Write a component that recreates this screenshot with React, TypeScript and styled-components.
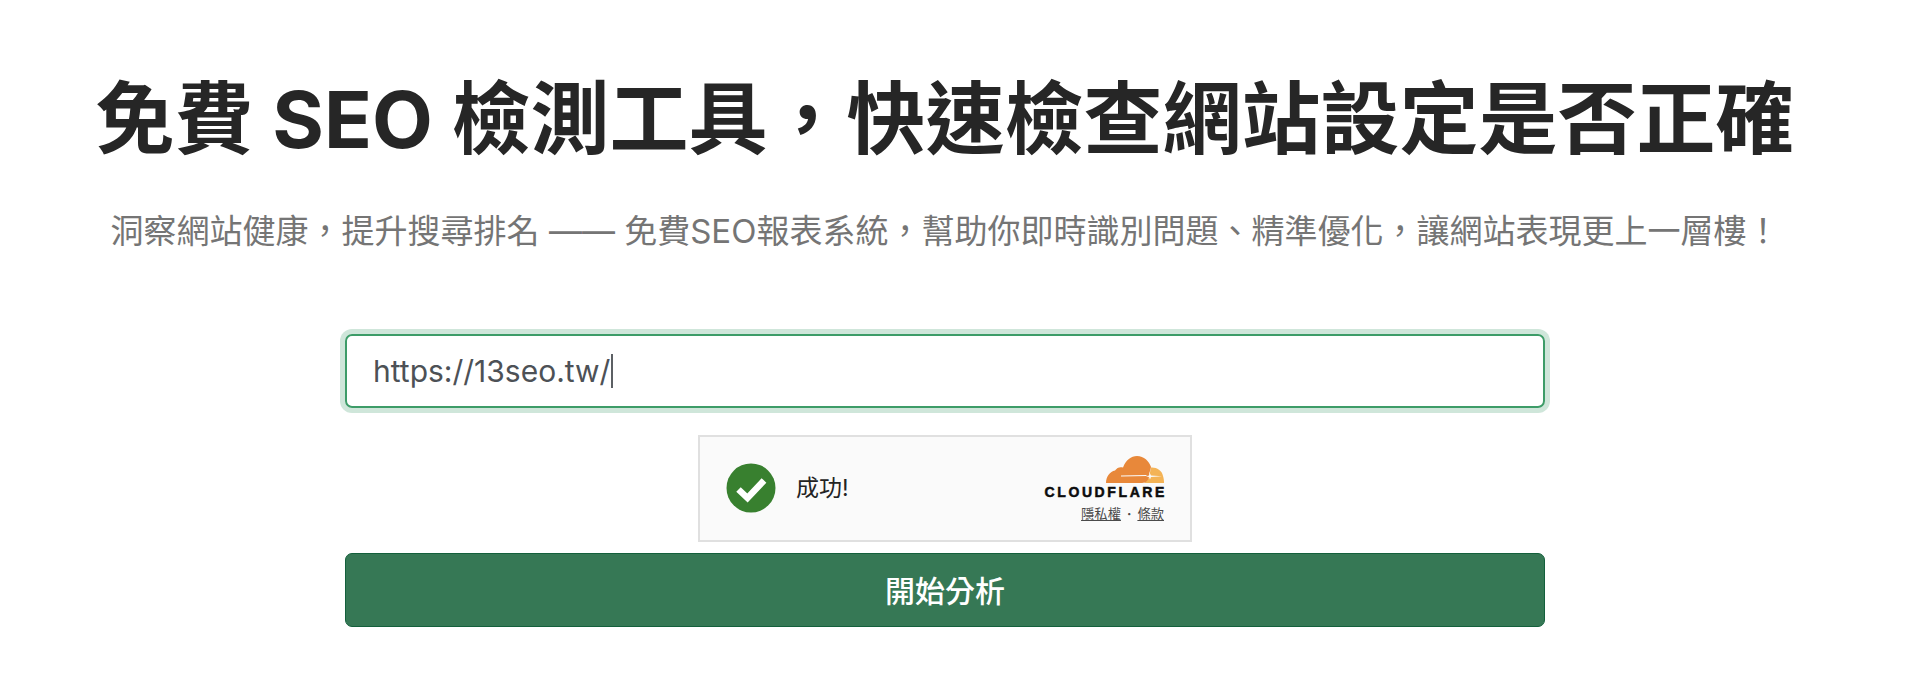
import styled, { createGlobalStyle } from "styled-components";

const TITLE = "免費 SEO 檢測工具\uFF0C快速檢查網站設定是否正確";
const SUBTITLE =
  "洞察網站健康\uFF0C提升搜尋排名 —— 免費SEO報表系統\uFF0C幫助你即時識別問題、精準優化\uFF0C讓網站表現更上一層樓\uFF01";

const GlobalStyle = createGlobalStyle`
  html, body {
    margin: 0;
    padding: 0;
    background-color: #fff;
    font-family: Inter, "Noto Sans CJK TC", sans-serif;
  }
`;

const Page = styled.main`
  display: flex;
  height: 700px;
  padding-top: 76px;
  padding-right: 30px;
  box-sizing: border-box;
  flex-direction: column;
  align-items: center;
  overflow: hidden;
`;

const Title = styled.h1`
  margin: 0;
  color: #262626;
  font-size: 79px;
  line-height: 86px;
  font-weight: 700;
  white-space: nowrap;
`;

const Subtitle = styled.p`
  margin: 46px 0 0;
  color: #757575;
  font-size: 33px;
  line-height: 46px;
  font-weight: 400;
  white-space: nowrap;
`;

const UrlInput = styled.div`
  display: flex;
  width: 1200px;
  height: 74px;
  margin-top: 80px;
  padding: 0 26px;
  box-sizing: border-box;
  align-items: center;
  border: 2px solid #3d9c68;
  border-radius: 7px;
  box-shadow: 0 0 0 5px #cfe6da;
  color: #4d5156;
  font-size: 30px;
`;

const Caret = styled.span`
  display: inline-block;
  width: 1.5px;
  height: 34px;
  margin-left: 1px;
  background-color: #5c6064;
`;

const Turnstile = styled.div`
  display: flex;
  width: 494px;
  height: 107px;
  margin-top: 27px;
  padding: 0 26px 2px;
  box-sizing: border-box;
  justify-content: space-between;
  align-items: center;
  border: 2px solid #e0e0e0;
  background-color: #fafafa;
`;

const Status = styled.div`
  display: flex;
  gap: 20px;
  align-items: center;
  color: #232323;
  font-size: 23px;
  line-height: 30px;
`;

const Brand = styled.div`
  display: flex;
  padding-top: 2px;
  flex-direction: column;
  align-items: flex-end;
`;

const BrandName = styled.span`
  margin-top: 3px;
  margin-right: -3px;
  color: #0c0c0c;
  font-family: "Liberation Sans", sans-serif;
  font-size: 14px;
  line-height: 13px;
  font-weight: 700;
  letter-spacing: 2.6px;
  -webkit-text-stroke: 0.5px #0c0c0c;
`;

const Legal = styled.div`
  display: flex;
  margin-top: 7px;
  gap: 6px;
  color: #4a4a4a;
  font-size: 13.3px;
  line-height: 16px;

  a {
    color: inherit;
    text-decoration: underline;
  }

  span {
    font-weight: 700;
  }
`;

const SubmitButton = styled.button`
  width: 1200px;
  height: 74px;
  margin-top: 11px;
  padding: 0 0 3px;
  border: 1px solid #14603c;
  border-radius: 7px;
  background-color: #367855;
  color: #fff;
  font-family: inherit;
  font-size: 30px;
  font-weight: 500;
`;

const CheckIcon = () => (
  <svg width="50" height="50" viewBox="0 0 50 50" aria-hidden="true">
    <circle cx="25" cy="25" r="24.5" fill="#38802f" />
    <path
      d="M12.5 26.5 L21.5 35 L38 17.5"
      fill="none"
      stroke="#fff"
      strokeWidth="6.5"
    />
  </svg>
);

const CloudLogo = () => (
  <svg width="58" height="27" viewBox="0 0 58 27" aria-hidden="true">
    <path
      d="M45 11.5 C50 11 56 14 57 20 C57.8 22 58 25 58 27 L38 27 C41 25 42.5 23 43 21 L45 11.5 Z"
      fill="#f4b355"
    />
    <path
      d="M0 27 C0 20.5 4 15.5 9 14.5 C11 11.5 14 10.5 17 11.5 C20 4 25 0 31 0 C38 0 43 5 45 11 C44.3 14 44 15.5 43 17.5 L43 21 C42.5 24 40 27 36 27 Z"
      fill="#e8883a"
    />
    <path d="M15 19.6 L40 19 L41 20 L15 20.4 Z" fill="#fafafa" />
    <path d="M40 20.2 L43 19.6 L44 17.5 L45 19.6 L56 20.2 L45 20.9 L44 23.5 L43 20.9 Z" fill="#fafafa" />
  </svg>
);

const App = () => (
  <>
    <GlobalStyle />
    <Page>
      <Title>{TITLE}</Title>
      <Subtitle>{SUBTITLE}</Subtitle>
      <UrlInput>
        https://13seo.tw/
        <Caret />
      </UrlInput>
      <Turnstile>
        <Status>
          <CheckIcon />
          成功!
        </Status>
        <Brand>
          <CloudLogo />
          <BrandName>CLOUDFLARE</BrandName>
          <Legal>
            <a href="#privacy">隱私權</a>
            <span>·</span>
            <a href="#terms">條款</a>
          </Legal>
        </Brand>
      </Turnstile>
      <SubmitButton type="button">開始分析</SubmitButton>
    </Page>
  </>
);

export default App;
